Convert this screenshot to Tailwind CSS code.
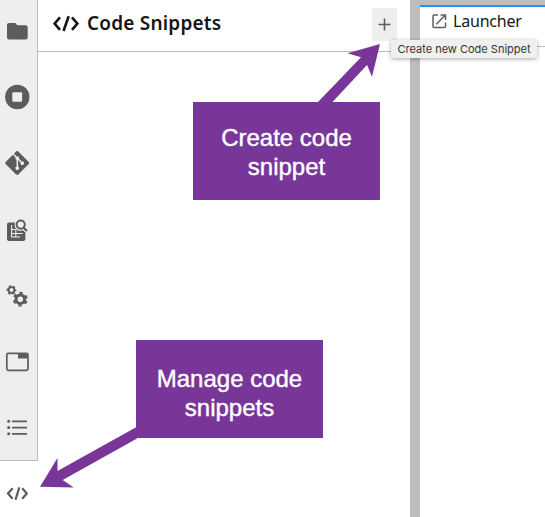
<!DOCTYPE html>
<html lang="en">
<head>
<meta charset="utf-8">
<title>Code Snippets</title>
<script src="https://cdn.jsdelivr.net/npm/@tailwindcss/browser@4"></script>
</head>
<body class="relative flex h-[517px] w-[545px] overflow-hidden bg-white font-['Noto_Sans',sans-serif] text-[#161616]">
  <nav class="flex w-[38px] shrink-0 flex-col text-[#5c5c5c]">
    <div class="flex h-[461px] flex-col gap-[42.2px] border-r border-b border-[#bdbdbd] bg-[#eeeeee] pt-[19px] pl-[5px]">
      <svg class="size-6 shrink-0 overflow-visible" viewBox="0 0 24 24" fill="currentColor"><path d="M10.200 4H4C2.800 4 2 4.900 2 6v12.500c0 1.100.9 2 2 2h16.700c1.100 0 2-.9 2-2V8.200c0-1.100-.9-2-2-2h-8.300z"/></svg>
      <svg class="size-6 shrink-0 overflow-visible" viewBox="0 0 24 24"><circle cx="12.300" cy="12" r="12.200" fill="currentColor"/><rect x="7.300" y="7.200" width="9.800" height="9.600" rx="1" fill="#eeeeee"/></svg>
      <svg class="size-6 shrink-0 overflow-visible" viewBox="-.2 0 24 24" fill="currentColor"><path d="M23.546 10.930L13.067.452c-.604-.603-1.582-.603-2.188 0L8.708 2.627l2.760 2.760c.645-.215 1.379-.07 1.889.441.516.515.658 1.258.438 1.900l2.658 2.660c.645-.223 1.387-.078 1.900.435.721.72.721 1.884 0 2.604-.719.719-1.881.719-2.600 0-.539-.541-.674-1.337-.404-1.996L12.860 8.955v6.525c.176.086.342.203.488.348.713.721.713 1.883 0 2.600-.719.721-1.889.721-2.609 0-.719-.719-.719-1.879 0-2.598.182-.18.387-.316.605-.406V8.835c-.217-.091-.424-.222-.6-.401-.545-.545-.676-1.342-.396-2.009L7.636 3.700.45 10.881c-.6.605-.6 1.584 0 2.189l10.480 10.477c.604.604 1.582.604 2.186 0l10.430-10.430c.605-.603.605-1.582 0-2.187"/></svg>
      <svg class="size-6 shrink-0 overflow-visible" viewBox="0 0 24 24"><path fill="currentColor" d="M4 4.500h6c-.9 2.600-.3 5.300 1.600 6.900 1.900 1.600 4.300 1.800 6.200.9l2.600 2.200v6.500c0 1.100-.9 2-2 2H4c-1.100 0-2-.9-2-2V6.500c0-1.100.9-2 2-2z"/><path d="M6.600 7v12.500M6.600 11.500h4M6.600 15.500h11M6.600 19h8.500M10.800 11.500v7.500" fill="none" stroke="#eeeeee" stroke-width="1.100"/><circle cx="15.700" cy="6.600" r="4.100" fill="#eeeeee" stroke="currentColor" stroke-width="2"/><path d="M18.500 9.500l3.500 3.500" stroke="currentColor" stroke-width="2.200"/></svg>
      <svg class="size-6 shrink-0 overflow-visible" viewBox="0 0 24 24" fill="none" stroke="currentColor"><circle cx="6.500" cy="6" r="2.900" stroke-width="1.900"/><circle cx="6.500" cy="6" r="4.100" stroke-width="1.500" stroke-dasharray="2.300 1.993" stroke-dashoffset="1.150"/><circle cx="15.300" cy="15.200" r="4.300" stroke-width="3"/><circle cx="15.300" cy="15.200" r="6.300" stroke-width="2.200" stroke-dasharray="3.300 3.297" stroke-dashoffset="-1.650"/></svg>
      <svg class="size-6 shrink-0 overflow-visible" viewBox="0 0 24 24"><rect x="1.800" y="3.300" width="21.200" height="17" rx="1.500" fill="none" stroke="currentColor" stroke-width="1.700"/><path fill="currentColor" d="M13 3h9.500v5.500H13z"/></svg>
      <svg class="size-6 shrink-0 overflow-visible" viewBox="0 0 24 24" fill="currentColor"><circle cx="3.700" cy="5.300" r="1.500"/><circle cx="3.700" cy="11.600" r="1.500"/><circle cx="3.700" cy="17.800" r="1.500"/><path d="M7 4.400h15v1.800H7zM7 10.700h15v1.800H7zM7 16.900h15v1.800H7z"/></svg>
    </div>
    <div class="flex h-14 bg-white pt-[20px] pl-[5px]">
      <svg class="size-6" viewBox="0 0 24 24" fill="none" stroke="currentColor" stroke-width="2.200"><path d="M7.600 7.200L3 12.500l4.600 5.300M17.200 7.200l4.600 5.300-4.600 5.300M14.300 6.400L10.500 18.800"/></svg>
    </div>
  </nav>

  <main class="w-[372px] shrink-0">
    <header class="flex h-[52px] items-start border-b border-[#bdbdbd] pl-[15px]">
      <svg class="mt-[12px] h-6 w-[26px] shrink-0" viewBox="0 0 26 24" fill="none" stroke="#161616" stroke-width="2.600"><path d="M7 5.300L1.600 11.600 7 17.900M19 5.300l5.400 6.300-5.400 6.300M15.700 4.200L10.500 19"/></svg>
      <h1 class="mt-[10px] ml-[8px] w-[270px] text-[19px] leading-[27px] font-semibold tracking-[0.2px] whitespace-nowrap">Code Snippets</h1>
      <button class="mt-[8px] ml-[15px] flex h-[33px] w-[25px] shrink-0 items-center justify-center bg-[#eeeeee]">
        <svg class="size-[13px]" viewBox="0 0 13 13" stroke="#5c5c5c" stroke-width="1.600"><path d="M6.500 .5v12M.5 6.500h12"/></svg>
      </button>
    </header>
  </main>
  <div class="w-[10px] shrink-0 bg-[#bdbdbd]"></div>
  <section class="flex min-w-0 flex-1 flex-col">
    <div class="h-[5px] bg-[#bdbdbd]"></div>
    <div class="flex h-[42px] border-t-2 border-b border-t-[#2196f3] border-b-[#bdbdbd] pl-[12px]">
      <svg class="mt-[7px] size-[15px] shrink-0" viewBox="0 0 15 15" fill="none" stroke="#616161" stroke-width="1.500"><path d="M6 1H2a1 1 0 0 0-1 1v10.500a1 1 0 0 0 1 1h10.500a1 1 0 0 0 1-1V8.500M8.500 1h5v5M13.200 1.300L4.300 10.200"/></svg>
      <span class="mt-[3px] ml-[6px] text-[16px] leading-[22px] tracking-[-0.2px]">Launcher</span>
    </div>
  </section>

  <svg class="pointer-events-none absolute inset-0 h-[517px] w-[545px]" viewBox="0 0 545 517" fill="#783698"><path d="M380 44L347.500 53.200 361 57.300 317.500 102.500H332L367 65 372 76.700z"/><path d="M40 486.700L57.500 458V471L137 426.800V438.500L62.700 480 73.700 487.500z"/></svg>
  <div class="absolute top-[102px] left-[193px] flex h-[98px] w-[187px] items-center justify-center bg-[#783698] pt-[1px] text-center font-['Liberation_Sans',sans-serif] text-[24px] leading-[29px] text-white [-webkit-text-stroke:0.4px_white]">Create code<br>snippet</div>
  <div class="absolute top-[340px] left-[136px] flex h-[98px] w-[187px] items-center justify-center bg-[#783698] pt-[8px] text-center font-['Liberation_Sans',sans-serif] text-[24px] leading-[29px] text-white [-webkit-text-stroke:0.4px_white]">Manage code<br>snippets</div>
  <div class="absolute top-[40px] left-[391px] flex h-[18px] w-[146px] items-center justify-center bg-[#f0f0f0] font-['Inter',sans-serif] text-[11px] whitespace-nowrap text-[#333333] shadow-[0_1px_4px_rgba(0,0,0,0.35)]">Create new Code Snippet</div>
</body>
</html>
